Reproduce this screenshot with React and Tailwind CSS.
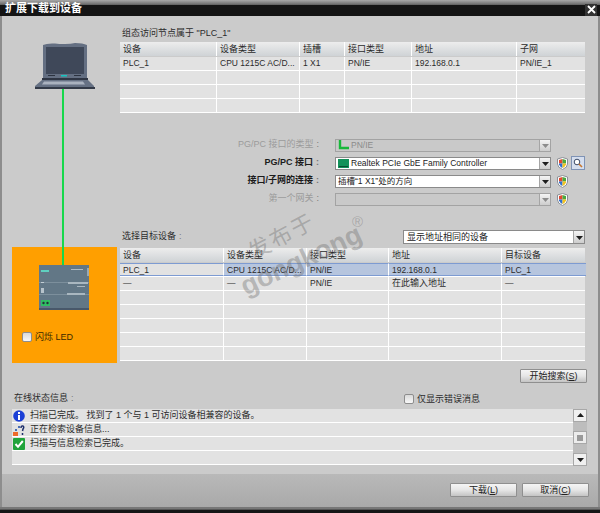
import React from 'react';

const cjk = '"Liberation Sans", "Noto Sans CJK SC", sans-serif';

const Laptop = () => (
  <svg width="60" height="47" viewBox="0 0 60 47" className="block">
    <path d="M8 3 Q12 1 20 1.5 Q24 2 30 2 Q36 2 40 1 Q48 1 52 3 V36 H8 Z" fill="#646f82" />
    <rect x="11" y="5" width="38" height="27" fill="#3f4859" />
    <rect x="13" y="33" width="7" height="1" fill="#2c3340" />
    <rect x="26" y="33" width="6" height="1.5" fill="#19c3c0" />
    <rect x="39" y="33" width="7" height="1" fill="#2c3340" />
    <rect x="7" y="36" width="46" height="2" fill="#2f3644" />
    <path d="M7 38 H53 L59 44 V47 H0 V44 Z" fill="#667184" />
    <path d="M9 39.5 H48 L50 42.5 H7 Z" fill="#aab2bf" />
    <rect x="0" y="45" width="60" height="2" fill="#333a48" />
  </svg>
);

const Plc = () => (
  <svg width="50" height="45" viewBox="0 0 50 45" className="block">
    <rect width="50" height="45" fill="#627786" />
    <rect y="43" width="50" height="2" fill="#48586a" />
    <rect x="2" y="5" width="8" height="2" fill="#5fd0c0" />
    <rect x="32" y="4" width="12" height="1" fill="#aebcc6" />
    <rect x="48" y="3" width="2" height="8" fill="#9aa9b3" />
    <rect y="17" width="50" height="1" fill="#7c8f9c" />
    <rect x="29" y="17" width="20" height="2" fill="#a9b7c0" />
    <rect x="38" y="21" width="8" height="1" fill="#a9b7c0" />
    <rect x="2" y="17" width="3" height="1" fill="#c3ced5" />
    <rect x="2" y="23" width="3" height="5" fill="#b7c3cb" />
    <rect y="29" width="50" height="1" fill="#7c8f9c" />
    <rect x="28" y="28" width="18" height="2" fill="#a9b7c0" />
    <rect x="2" y="35" width="9" height="6" fill="#2fbf63" />
    <circle cx="4.5" cy="38" r="1.2" fill="#24323a" />
    <circle cx="8.5" cy="38" r="1.2" fill="#24323a" />
  </svg>
);

const Shield = () => (
  <svg width="11" height="13" viewBox="0 0 11 13" className="block shrink-0">
    <path d="M5.5 .5 L10.5 2 V7 Q10.5 10.5 5.5 12.5 Q.5 10.5 .5 7 V2 Z" fill="#fff" stroke="#8a8f96" />
    <path d="M2 3 L5.5 2 V6.5 H2 Z" fill="#e2482f" />
    <path d="M5.5 2 L9 3 V6.5 H5.5 Z" fill="#4aa83f" />
    <path d="M2 6.5 H5.5 V11 Q3 10 2 7.5 Z" fill="#2f6fd0" />
    <path d="M5.5 6.5 H9 V7.5 Q8 10 5.5 11 Z" fill="#f2c21f" />
  </svg>
);

const Arrow = ({ disabled, dir = 'down' }) => (
  <svg width="7" height="5" viewBox="0 0 7 5" className="block">
    <path d={dir === 'down' ? 'M0 1 H7 L3.5 5 Z' : 'M0 4 H7 L3.5 0 Z'} fill={disabled ? '#8c8c8c' : '#1d1d1d'} />
  </svg>
);

const Check = () => (
  <span className="block w-[10px] h-[10px] shrink-0 rounded-[2px] border border-[#8d8d8d] bg-gradient-to-b from-[#d9d9d9] to-[#f8f8f8]" />
);

const Btn = ({ label, hot, w }) => (
  <button className={`${w} h-[14px] flex items-center justify-center rounded-[1px] border border-[#8f8f8f] bg-gradient-to-b from-[#f5f5f5] via-[#e6e6e6] to-[#c4c4c4] text-[9px] text-[#222] leading-none`}>
    {label}(<span className="underline">{hot}</span>)
  </button>
);

const DeviceTable = ({ cols, head, rows, rowH, selected }) => (
  <div className="flex flex-col text-[#2b2b2b]">
    <div className="flex h-[14px] mb-px bg-gradient-to-b from-[#ededed] to-[#cfd3d6]">
      {head.map((h, i) => (
        <div key={h} className={`${cols[i]} shrink-0 pl-[3px] text-[9px] leading-[14px] border-r border-white last:border-r-0`}>{h}</div>
      ))}
    </div>
    {rows.map((r, ri) => (
      <div key={ri} className={`flex ${rowH} bg-[#e2e2e2] border-b border-white`}>
        {r.map((c, i) => (
          <div
            key={i}
            className={`${cols[i]} shrink-0 pl-[3px] text-[8.5px] leading-[13px] truncate border-r border-white last:border-r-0 ${
              ri === selected && i > 0 ? 'bg-[#b6c5de] border-y border-y-[#7d9bd2]' : ri === selected ? 'border-y border-y-[#7d9bd2]' : ''
            }`}
          >
            {c}
          </div>
        ))}
      </div>
    ))}
  </div>
);

const FormRow = ({ label, disabled, bold, icon, text, shield, search }) => (
  <div className="flex items-center h-[18px]">
    <div className={`w-[201px] pr-[2px] text-right text-[9px] ${disabled ? 'text-[#9b9b9b]' : 'text-[#1c1c1c]'} ${bold ? 'font-bold' : ''}`}>
      {label}<span className="ml-[3px] text-[#777]">:</span>
    </div>
    <div className={`ml-[14px] w-[216px] h-[13px] flex items-center justify-between border ${disabled ? 'border-[#a3a3a3] bg-[#c9c9c9]' : 'border-[#8a8a8a] bg-white'}`}>
      <div className={`flex items-center gap-[2px] pl-[2px] text-[8.5px] leading-none ${disabled ? 'text-[#8b8b8b]' : 'text-[#222]'}`}>
        {icon}
        {text}
      </div>
      <div className="w-[11px] h-full flex items-center justify-center border-l border-[#a5a5a5] bg-gradient-to-b from-[#f4f4f4] to-[#cdcdcd]">
        <Arrow disabled={disabled} />
      </div>
    </div>
    {shield && <div className="ml-[6px]"><Shield /></div>}
    {search && (
      <div className="ml-[3px] w-[14px] h-[14px] flex items-center justify-center border border-[#7f93b5] bg-[#d5deee]">
        <svg width="10" height="10" viewBox="0 0 10 10">
          <circle cx="4" cy="4" r="2.8" fill="#fff" stroke="#3c4a66" />
          <path d="M6 6 L9 9" stroke="#c9762c" strokeWidth="1.6" />
        </svg>
      </div>
    )}
  </div>
);

const StatusRow = ({ icon, text }) => (
  <div className="flex items-center h-[14px] bg-[#e2e2e2] border-b border-white pl-[1px] gap-[5px] text-[9px] text-[#2b2b2b] leading-none">
    <span className="w-[12px] h-[12px] flex items-center justify-center shrink-0">{icon}</span>
    {text}
  </div>
);

const InfoIcon = () => (
  <svg width="12" height="12" viewBox="0 0 12 12">
    <circle cx="6" cy="6" r="5.8" fill="#1b3fd6" />
    <rect x="5" y="2" width="2" height="2" fill="#fff" />
    <rect x="5" y="5" width="2" height="5" fill="#fff" />
  </svg>
);

const SearchIcon = () => (
  <svg width="12" height="12" viewBox="0 0 12 12">
    <rect x="0" y="8" width="5" height="4" fill="#ee6a2a" />
    <rect x="2" y="5" width="2" height="2" fill="#4a6fb5" />
    <rect x="5" y="2" width="2" height="2" fill="#4a6fb5" />
    <path d="M8 4 Q8 1.5 10 2 Q11.5 3 10 5 L9.5 7 M9.5 9 V11" fill="none" stroke="#1c2e6b" strokeWidth="1.5" />
  </svg>
);

const DoneIcon = () => (
  <svg width="12" height="12" viewBox="0 0 12 12">
    <rect width="12" height="12" rx="1" fill="#1fa33a" />
    <path d="M2.5 6 L5 8.8 L9.8 3" fill="none" stroke="#fff" strokeWidth="2" />
  </svg>
);

export default function App() {
  const topCols = ['w-[97px]', 'w-[83px]', 'w-[45px]', 'w-[67px]', 'w-[105px]', 'w-[68px]'];
  const targetCols = ['w-[104px]', 'w-[83px]', 'w-[82px]', 'w-[113px]', 'w-[84px]'];

  return (
    <div className="relative w-[600px] h-[513px] flex flex-col overflow-hidden bg-[#cbcbcb]" style={{ fontFamily: cjk }}>
      {/* title bar */}
      <div className="h-[16px] shrink-0 flex items-center justify-between bg-[linear-gradient(to_bottom,#a8a8a8_0,#6c6c6c_28%,#141414_30%,#141414_100%)]">
        <span className="pl-[5px] text-[11px] font-bold text-white leading-none">扩展下载到设备</span>
        <span className="mr-[3px] w-[12px] h-[12px] mt-[3px] flex items-center justify-center bg-[#333]">
          <svg width="9" height="9" viewBox="0 0 9 9">
            <path d="M1 1 L8 8 M8 1 L1 8" stroke="#fff" strokeWidth="1.8" />
          </svg>
        </span>
      </div>

      <div className="flex-1 flex flex-col border-l-2 border-r-[2px] border-[#8d8d8d] min-h-0">
        {/* main area */}
        <div className="flex pl-[10px] pt-[11px]">
          <div className="w-[105px] flex flex-col pt-[15px] mr-[3px] h-[336px]">
            <div className="ml-[23px]"><Laptop /></div>
            <div className="ml-[50px] w-[2px] flex-1 bg-[#17d84b]" />
            <div className="h-[116px] bg-[#ff9f00] flex flex-col">
              <div className="ml-[50px] w-[2px] h-[18px] bg-[#17d84b]" />
              <div className="ml-[27px]"><Plc /></div>
              <div className="flex items-center gap-[3px] ml-[10px] mt-[22px] text-[9px] text-[#3a2a00] leading-none">
                <Check />
                闪烁 LED
              </div>
            </div>
          </div>

          <div className="w-[465px] flex flex-col">
            <div className="h-[15px] pl-[2px] text-[9px] text-[#2b2b2b] leading-[13px]">组态访问节点属于 "PLC_1"</div>
            <DeviceTable
              cols={topCols}
              rowH="h-[14px]"
              head={['设备', '设备类型', '插槽', '接口类型', '地址', '子网']}
              rows={[
                ['PLC_1', 'CPU 1215C AC/D...', '1 X1', 'PN/IE', '192.168.0.1', 'PN/IE_1'],
                ['', '', '', '', '', ''],
                ['', '', '', '', '', ''],
                ['', '', '', '', '', ''],
              ]}
            />

            <div className="mt-[23px] flex flex-col">
              <FormRow
                label="PG/PC 接口的类型"
                disabled
                text="PN/IE"
                icon={
                  <svg width="11" height="10" viewBox="0 0 11 10">
                    <path d="M2 0 V8 H11" fill="none" stroke="#18b83a" strokeWidth="2.4" />
                  </svg>
                }
              />
              <FormRow
                label="PG/PC 接口"
                bold
                text="Realtek PCIe GbE Family Controller"
                shield
                search
                icon={
                  <svg width="11" height="9" viewBox="0 0 11 9">
                    <rect width="11" height="9" fill="#13925a" />
                    <rect x="1" y="7" width="9" height="1" fill="#0b4f33" />
                  </svg>
                }
              />
              <FormRow label="接口/子网的连接" bold text="插槽“1 X1”处的方向" shield />
              <FormRow label="第一个网关" disabled text="" shield />
            </div>

            <div className="mt-[22px] flex items-center justify-between h-[14px]">
              <span className="pl-[2px] text-[9px] text-[#2b2b2b]">选择目标设备<span className="ml-[3px] text-[#777]">:</span></span>
              <div className="w-[182px] h-[14px] flex items-center justify-between border border-[#8a8a8a] bg-white">
                <span className="pl-[3px] text-[9px] text-[#222] leading-none">显示地址相同的设备</span>
                <div className="w-[11px] h-full flex items-center justify-center border-l border-[#a5a5a5] bg-gradient-to-b from-[#f4f4f4] to-[#cdcdcd]">
                  <Arrow />
                </div>
              </div>
            </div>

            <div className="mt-[4px]">
              <DeviceTable
                cols={targetCols}
                selected={0}
                rowH="h-[14px]"
                head={['设备', '设备类型', '接口类型', '地址', '目标设备']}
                rows={[
                  ['PLC_1', 'CPU 1215C AC/D...', 'PN/IE', '192.168.0.1', 'PLC_1'],
                  ['—', '—', 'PN/IE', <span className="text-[9px]">在此输入地址</span>, '—'],
                  ['', '', '', '', ''],
                  ['', '', '', '', ''],
                  ['', '', '', '', ''],
                  ['', '', '', '', ''],
                  ['', '', '', '', ''],
                ]}
              />
            </div>
          </div>
        </div>

        <div className="flex justify-end pr-[11px] mt-[6px]">
          <Btn label="开始搜索" hot="S" w="w-[67px]" />
        </div>

        {/* status */}
        <div className="flex items-center h-[14px] mt-[9px] pl-[12px]">
          <span className="w-[390px] text-[9px] text-[#2b2b2b]">在线状态信息<span className="ml-[3px] text-[#777]">:</span></span>
          <span className="flex items-center gap-[3px] text-[9px] text-[#2b2b2b] leading-none">
            <Check />
            仅显示错误消息
          </span>
        </div>
        <div className="flex ml-[10px] mt-[3px] w-[575px] h-[57px]">
          <div className="w-[561px] flex flex-col">
            <StatusRow icon={<InfoIcon />} text="扫描已完成。 找到了 1 个与 1 可访问设备相兼容的设备。" />
            <StatusRow icon={<SearchIcon />} text="正在检索设备信息..." />
            <StatusRow icon={<DoneIcon />} text="扫描与信息检索已完成。" />
            <StatusRow text="" />
          </div>
          <div className="w-[14px] flex flex-col justify-between items-center bg-[#bdbdbd]">
            <div className="w-[14px] h-[13px] flex items-center justify-center border border-[#a8a8a8] bg-[#f0f0f0]"><Arrow dir="up" /></div>
            <div className="w-[14px] h-[13px] flex items-center justify-center border border-[#a8a8a8] bg-[#ececec]">
              <span className="block w-[6px] h-[6px] bg-[#9a9a9a]" />
            </div>
            <div className="w-[14px] h-[13px] flex items-center justify-center border border-[#a8a8a8] bg-[#f0f0f0]"><Arrow /></div>
          </div>
        </div>

        {/* footer */}
        <div className="mt-auto h-[33px] shrink-0 flex justify-end gap-[5px] pt-[9px] pr-[9px] bg-gradient-to-b from-[#b9b9b9] to-[#a9a9a9]">
          <Btn label="下载" hot="L" w="w-[67px]" />
          <Btn label="取消" hot="C" w="w-[67px]" />
        </div>
      </div>
      <div className="h-[6px] shrink-0 bg-[linear-gradient(to_bottom,#777_0,#777_40%,#161616_45%,#161616_100%)]" />

      {/* watermark */}
      <div className="absolute left-[246px] top-[226px] -rotate-[28deg] text-[22px] tracking-[2px] text-[#6f6f6f]/40 leading-none pointer-events-none">发布于</div>
      <div className="absolute left-[236px] top-[247px] -rotate-[25deg] text-[27px] font-bold text-[#6f6f6f]/40 leading-none pointer-events-none">gongkong</div>
      <div className="absolute left-[352px] top-[214px] text-[15px] text-[#6f6f6f]/40 leading-none pointer-events-none">®</div>
    </div>
  );
}
